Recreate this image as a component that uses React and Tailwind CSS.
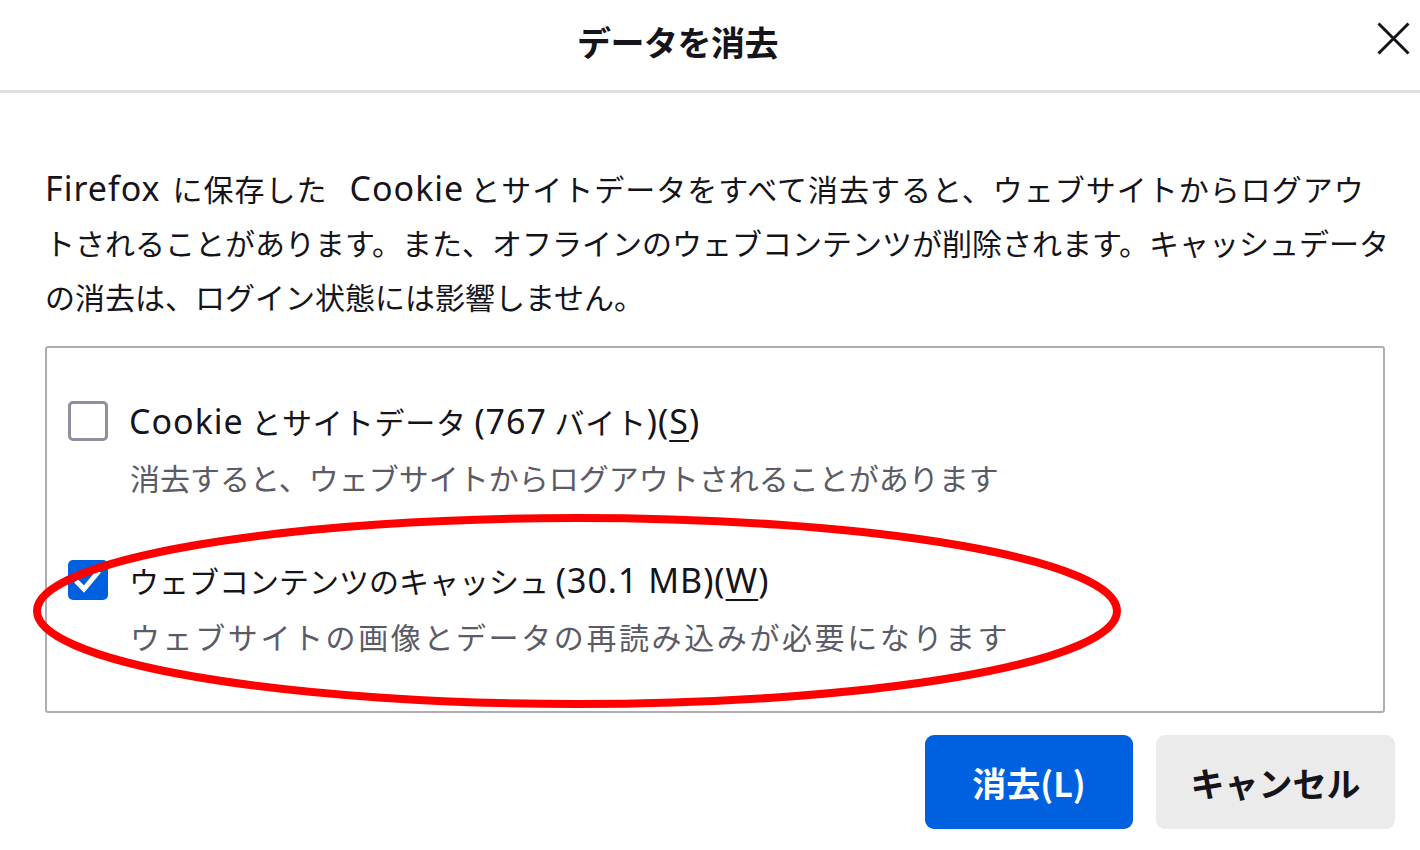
import React from "react";

const font = "font-['Noto_Sans_CJK_JP',sans-serif]";
const lat = "font-['Noto_Sans','Noto_Sans_CJK_JP',sans-serif] text-[34px] tracking-[1px]";

function L({ children, className = "" }) {
  return <span className={`${lat} ${className}`}>{children}</span>;
}

function Checkbox({ checked }) {
  if (checked) {
    return (
      <div className="w-[40px] h-[40px] rounded-[5px] bg-[#0061e0] flex items-center justify-center shrink-0">
        <svg width="32" height="32" viewBox="0 0 32 32">
          <path d="M4 17 L12 25 L27 7" fill="none" stroke="white" strokeWidth="5" strokeLinecap="butt" strokeLinejoin="miter" />
        </svg>
      </div>
    );
  }
  return <div className="w-[40px] h-[40px] rounded-[5px] border-[3px] border-[#8f8f9d] bg-white shrink-0" />;
}

function Item({ checked, children, desc, labelCls = "", descCls = "" }) {
  return (
    <div className="flex flex-col">
      <div className="flex items-center gap-[21px] h-[54px]">
        <Checkbox checked={checked} />
        <span className={`text-[30px] text-[#15141a] whitespace-nowrap ${labelCls}`}>{children}</span>
      </div>
      <div className={`pl-[62px] h-[58px] flex items-center text-[30px] text-[#5b5b66] whitespace-nowrap ${descCls}`}>
        {desc}
      </div>
    </div>
  );
}

function U({ children }) {
  return <span className="underline underline-offset-[6px] decoration-[2px]">{children}</span>;
}

export default function App() {
  return (
    <div className={`relative w-[1420px] h-[850px] bg-white overflow-hidden ${font}`}>
      <div className="flex items-center h-[93px] border-b-[3px] border-[#e1e1e5]">
        <div className="flex-1 text-center text-[34px] font-bold text-[#15141a] tracking-[-0.5px] pb-[8px]">
          データを消去
        </div>
        <div className="w-[65px] h-full flex items-center justify-end pr-[10px] pb-[14px]">
          <svg width="33" height="33" viewBox="0 0 33 33">
            <path d="M1.5 1.5 L31.5 31.5 M31.5 1.5 L1.5 31.5" stroke="#15141a" strokeWidth="3" />
          </svg>
        </div>
      </div>

      <div className="pl-[45px] pr-[35px] pt-[68px]">
        <div className="text-[30px] leading-[54px] text-[#15141a]">
          <div className="whitespace-nowrap tracking-[1px]">
            <L>Firefox</L><span className="ml-[12px]">に保存した</span>
            <L className="ml-[22px] mr-[6px]">Cookie</L>とサイトデータをすべて消去すると、ウェブサイトからログアウ
          </div>
          <div className="whitespace-nowrap">トされることがあります。また、オフラインのウェブコンテンツが削除されます。キャッシュデータ</div>
          <div className="whitespace-nowrap">の消去は、ログイン状態には影響しません。</div>
        </div>

        <div className="mt-[23px] border-2 border-[#adadb3] rounded-[3px] pl-[21px] pt-[46px] pb-[46px] flex flex-col gap-[47px]">
          <Item
            checked={false}
            labelCls="tracking-[0.8px]"
            desc="消去すると、ウェブサイトからログアウトされることがあります"
          >
            <L>Cookie</L> とサイトデータ <L>(767</L> バイト<L>)(<U>S</U>)</L>
          </Item>
          <Item
            checked={true}
            descCls="tracking-[2.6px]"
            desc="ウェブサイトの画像とデータの再読み込みが必要になります"
          >
            ウェブコンテンツのキャッシュ <L>(30.1 MB)(<U>W</U>)</L>
          </Item>
        </div>
      </div>

      <div className="flex justify-end gap-[23px] pr-[25px] mt-[22px]">
        <button className="w-[208px] h-[94px] rounded-[9px] bg-[#0061e0] text-white text-[34px] font-bold">
          消去(L)
        </button>
        <button className="w-[239px] h-[94px] rounded-[9px] bg-[#ebebeb] text-[#15141a] text-[34px] font-bold">
          キャンセル
        </button>
      </div>

      <svg className="absolute left-0 top-0 pointer-events-none" width="1420" height="850">
        <ellipse cx="577" cy="611" rx="540" ry="93" fill="none" stroke="#ff0000" strokeWidth="8" />
      </svg>
    </div>
  );
}
